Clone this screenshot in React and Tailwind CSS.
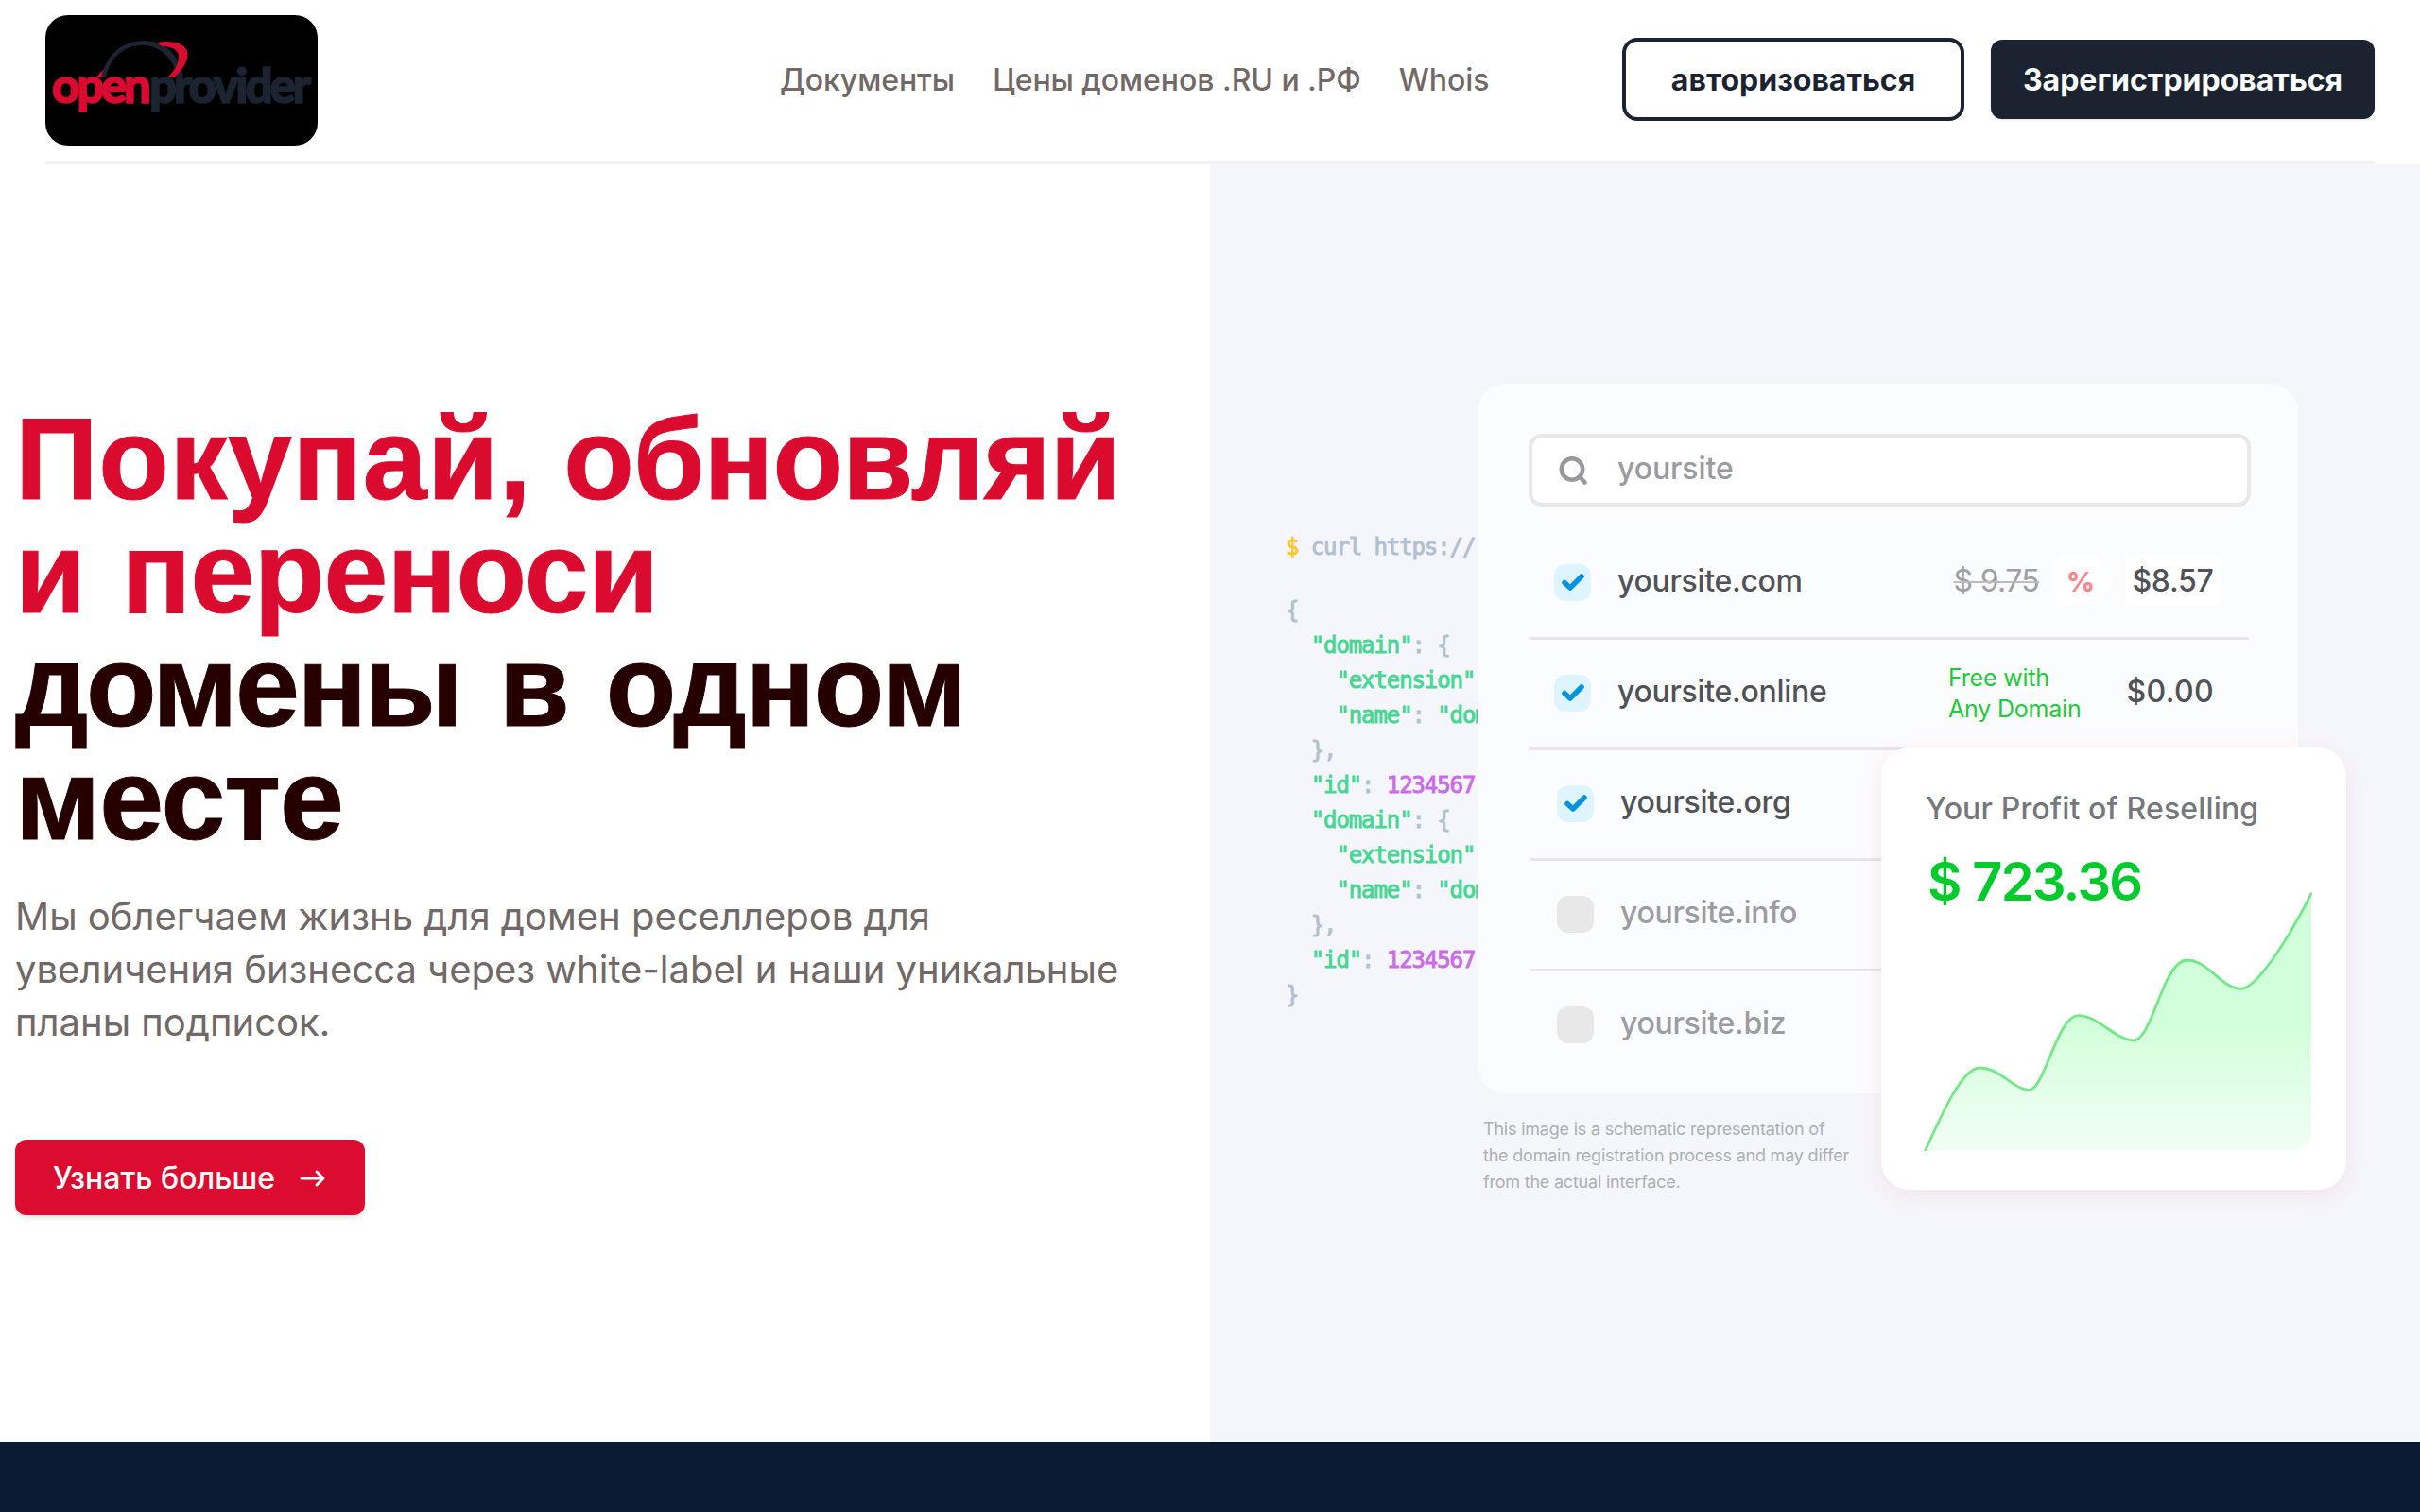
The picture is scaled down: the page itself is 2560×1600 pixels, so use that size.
const navLinks = ['Документы', 'Цены доменов .RU и .РФ', 'Whois'];

const codeLines = [
  [['text-[#b0c1cf]', '{']],
  [['text-[#47d693]', '  "domain"'], ['text-[#b0c1cf]', ': {']],
  [['text-[#47d693]', '    "extension"']],
  [['text-[#47d693]', '    "name"'], ['text-[#b0c1cf]', ': '], ['text-[#47d693]', '"dom']],
  [['text-[#b0c1cf]', '  },']],
  [['text-[#47d693]', '  "id"'], ['text-[#b0c1cf]', ': '], ['text-[#cb6ce6]', '1234567']],
  [['text-[#47d693]', '  "domain"'], ['text-[#b0c1cf]', ': {']],
  [['text-[#47d693]', '    "extension"']],
  [['text-[#47d693]', '    "name"'], ['text-[#b0c1cf]', ': '], ['text-[#47d693]', '"dom']],
  [['text-[#b0c1cf]', '  },']],
  [['text-[#47d693]', '  "id"'], ['text-[#b0c1cf]', ': '], ['text-[#cb6ce6]', '1234567']],
  [['text-[#b0c1cf]', '}']],
];

function Logo() {
  return (
    <svg className="h-[138px] w-[288px] rounded-3xl bg-black" viewBox="48 16 288 138" role="img" aria-label="openprovider">
      <path fill="#d90b30" d="M111.5 71.500L102 81.500H108Z" />
      <path fill="#1c2331" d="M107.500 81.500C112 58 130 43 151.500 43C173 43 190 57 194 81.500H187.500C183 61 170 49 152 48C132 47 117 60 112 81.500Z" />
      <path fill="#d90b30" d="M165.500 45C183 42 198 46 198.500 57C199 66 191 76 184.500 82L177.500 81.500C186 74 190.500 64 188.500 57C186.500 51 178 49 171.500 49Z" />
      <g className="font-[Lato] text-[51px] font-black" strokeWidth="1.500">
        <text x="55" y="109" fill="#d90b30" stroke="#d90b30" textLength="105" lengthAdjust="spacing">open</text>
        <text x="158" y="109" fill="#1c2331" stroke="#1c2331" textLength="171" lengthAdjust="spacing">provider</text>
      </g>
    </svg>
  );
}

function Header() {
  return (
    <header className="bg-white px-12">
      <div className="flex h-[174px] items-center border-b-4 border-[#f2f3f6]">
        <Logo />
        <nav className="ml-[489px] flex gap-10">
          {navLinks.map((link) => (
            <a key={link} href="#" className="text-[32px] font-medium tracking-[-0.05px] text-[#716868]">
              {link}
            </a>
          ))}
        </nav>
        <div className="-mt-0.5 ml-auto flex items-center gap-7">
          <a
            href="#"
            className="flex h-[88px] w-[362px] items-center justify-center rounded-2xl border-4 border-[#1c2330] pt-px text-[32px] font-bold text-[#1c2330]"
          >
            авторизоваться
          </a>
          <a
            href="#"
            className="flex h-[84px] w-[406px] items-center justify-center rounded-xl bg-[#1c2330] pt-px text-[32px] font-bold text-white shadow-sm"
          >
            Зарегистрироваться
          </a>
        </div>
      </div>
    </header>
  );
}

function SearchBox() {
  return (
    <div className="flex h-[77px] w-[764px] items-center rounded-[14px] border-4 border-[#e8e8e8] bg-white pl-[28px]">
      <svg className="h-8 w-8" viewBox="0 0 32 32" fill="none" stroke="#98989d" strokeWidth="4.500" strokeLinecap="round">
        <circle cx="14" cy="14.500" r="11.200" />
        <path d="M22.500 23L27.500 28.500" />
      </svg>
      <span className="ml-[30px] pb-[3px] text-[32px] font-medium tracking-[-0.1px] text-[#9a9a9f]">yoursite</span>
    </div>
  );
}

function Checkbox({ checked }) {
  if (!checked) return <span className="-mt-0.5 h-[39px] w-[39px] rounded-xl bg-[#e8e8e8]" />;
  return (
    <span className="-mt-0.5 flex h-[39px] w-[39px] items-center justify-center rounded-xl bg-[#def5ff]">
      <svg className="h-6 w-6" viewBox="0 0 24 24" fill="none" stroke="#0593dc" strokeWidth="5.500" strokeLinecap="round" strokeLinejoin="round">
        <path d="M3 12.500L9 18L21 6" />
      </svg>
    </span>
  );
}

function DomainRow({ name, checked, shifted, last, children }) {
  return (
    <div
      className={`flex h-[117px] items-center ${shifted ? 'ml-0.5 pl-7' : 'pl-[27px]'} ${
        last ? 'pb-[3px]' : 'border-b-[3px] border-[#ebe5e7]'
      }`}
    >
      <Checkbox checked={checked} />
      <span
        className={`ml-[28px] pb-[5px] text-[32px] font-medium tracking-[-0.3px] ${
          checked ? 'text-[#515257]' : 'text-[#9b9ca1]'
        }`}
      >
        {name}
      </span>
      {children}
    </div>
  );
}

function DomainCard() {
  return (
    <div className="h-[751px] w-[868px] rounded-[30px] bg-[#fbfcfe] pl-[54px] pt-[53px]">
      <SearchBox />
      <div className="mt-6 w-[762px]">
        <DomainRow name="yoursite.com" checked>
          <div className="ml-auto mr-[30px] flex items-center pb-[5px]">
            <span className="text-[32px] tracking-[-0.7px] text-[#9fa0a4] line-through decoration-[#bcbcc0] decoration-2">$ 9.75</span>
            <span className="relative ml-[18px] flex h-[53px] w-[60px] items-center">
              <svg className="absolute inset-0" viewBox="0 0 60 53" fill="#fff">
                <path d="M8 0H36Q42 0 45 5L58 23Q60 26.500 58 30L45 48Q42 53 36 53H8Q0 53 0 45V8Q0 0 8 0Z" />
              </svg>
              <span className="relative ml-[11px] pt-0.5 text-[29px] font-extrabold tracking-[-1px] text-[#ff878b]">%</span>
            </span>
            <span className="ml-[13px] flex h-[53px] w-[101px] items-center justify-center rounded-md bg-white text-[32px] font-medium tracking-[-0.3px] text-[#515257]">
              $8.57
            </span>
          </div>
        </DomainRow>
        <DomainRow name="yoursite.online" checked>
          <div className="ml-auto mr-[37px] flex w-[281px] items-center justify-between">
            <span className="text-[25px] leading-[33px] tracking-[-0.2px] text-[#21ca38]">
              Free with
              <br />
              Any Domain
            </span>
            <span className="pb-1 text-[32px] font-medium tracking-[0.4px] text-[#515257]">$0.00</span>
          </div>
        </DomainRow>
        <DomainRow name="yoursite.org" checked shifted />
        <DomainRow name="yoursite.info" shifted />
        <DomainRow name="yoursite.biz" shifted last />
      </div>
    </div>
  );
}

function ProfitCard() {
  return (
    <div className="absolute left-[427px] top-[385px] h-[468px] w-[492px] rounded-[30px] bg-white pt-[45px] shadow-[0_6px_24px_rgba(240,60,80,0.1)]">
      <div className="ml-[47px] text-[32px] font-medium leading-10 tracking-[0.15px] text-[#76777c]">Your Profit of Reselling</div>
      <div className="ml-[49px] mt-[25px] text-[56px] font-semibold leading-[64px] tracking-[-1.7px] text-[#00cb2c]">$ 723.36</div>
      <svg className="-mt-[21px] ml-11 h-[274px] w-[412px]" viewBox="0 0 412 274" fill="none">
        <defs>
          <linearGradient id="profit" x1="0" y1="0" x2="0" y2="1">
            <stop offset="0.5" stopColor="#d2ffdb" />
            <stop offset="1" stopColor="#f2fef4" />
          </linearGradient>
        </defs>
        <path
          fill="url(#profit)"
          d="M2.500 274C20 235 42 186 60 186C82 186 96 209.300 112.500 209.300C129 209.300 142 130.700 164.600 130.700C185 130.700 205 157 223 157C243 157 254 72 279.600 72C302 72 316 102.300 336.700 102.300C352 102.300 384 55 411 1.700V250Q411 274 387 274Z"
        />
        <path
          stroke="#73e888"
          strokeWidth="2.800"
          strokeLinecap="round"
          d="M2.500 274C20 235 42 186 60 186C82 186 96 209.300 112.500 209.300C129 209.300 142 130.700 164.600 130.700C185 130.700 205 157 223 157C243 157 254 72 279.600 72C302 72 316 102.300 336.700 102.300C352 102.300 384 55 411 1.700"
        />
      </svg>
    </div>
  );
}

function Code() {
  return (
    <div className="mt-[155px] w-[203px] shrink-0 overflow-hidden whitespace-pre font-['DejaVu_Sans_Mono',monospace] text-[24px] leading-[37px] tracking-[-1.100px] [-webkit-text-stroke:0.900px]">
      <div className="mb-[30px] text-[#b0c1cf]">
        <span className="text-[#fdc62f]">$</span> curl https://
      </div>
      {codeLines.map((parts, i) => (
        <div key={i}>
          {parts.map(([color, text], j) => (
            <span key={j} className={color}>{text}</span>
          ))}
        </div>
      ))}
    </div>
  );
}

function Hero() {
  return (
    <section className="grid h-[1352px] grid-cols-2">
      <div className="bg-white pl-4 pt-[252px]">
        <h1 className="whitespace-nowrap font-['Liberation_Sans',sans-serif] text-[122px] font-bold leading-[120px] text-[#260000] [-webkit-text-stroke:1px]">
          <span className="text-[#db0b2f]">
            <span className="tracking-[0.600px]">Покупай,</span> <span className="tracking-[-0.800px]">обновляй</span>
            <br />
            <span className="tracking-[-0.700px] [word-spacing:5px]">и переноси</span>
          </span>
          <br />
          <span className="tracking-[-2.500px] [word-spacing:9px]">
            домены в <span className="tracking-[-1.300px]">одном</span>
          </span>
          <br />
          <span className="tracking-[-1px]">месте</span>
        </h1>
        <p className="mt-9 w-[1200px] text-[40px] leading-[56px] text-[#716868]">
          Мы облегчаем жизнь для домен реселлеров для
          <br />
          увеличения бизнесса через white-label и наши уникальные
          <br />
          планы подписок.
        </p>
        <a
          href="#"
          className="mt-24 inline-flex h-20 w-[370px] items-center rounded-xl bg-[#db0c2f] pl-10 pt-px text-[32px] font-medium text-white shadow-md"
        >
          Узнать больше
          <svg className="ml-[26px] h-7 w-7" viewBox="0 0 28 28" fill="none" stroke="#fff" strokeWidth="3" strokeLinecap="round" strokeLinejoin="round">
            <path d="M2 14H25M18 7L25 14L18 21" />
          </svg>
        </a>
      </div>
      <div className="flex items-start bg-[#f5f6fc] pl-20 pt-[232px]">
        <Code />
        <div className="relative">
          <DomainCard />
          <p className="ml-1.5 mt-6 text-[18px] leading-[28px] tracking-[-0.210px] text-[#adafb4]">
            This image is a schematic representation of
            <br />
            the domain registration process and may differ
            <br />
            from the actual interface.
          </p>
          <ProfitCard />
        </div>
      </div>
    </section>
  );
}

export default function App() {
  return (
    <div className="h-[1600px] overflow-hidden bg-[#0b1b32] font-[Inter,sans-serif]">
      <Header />
      <Hero />
    </div>
  );
}
